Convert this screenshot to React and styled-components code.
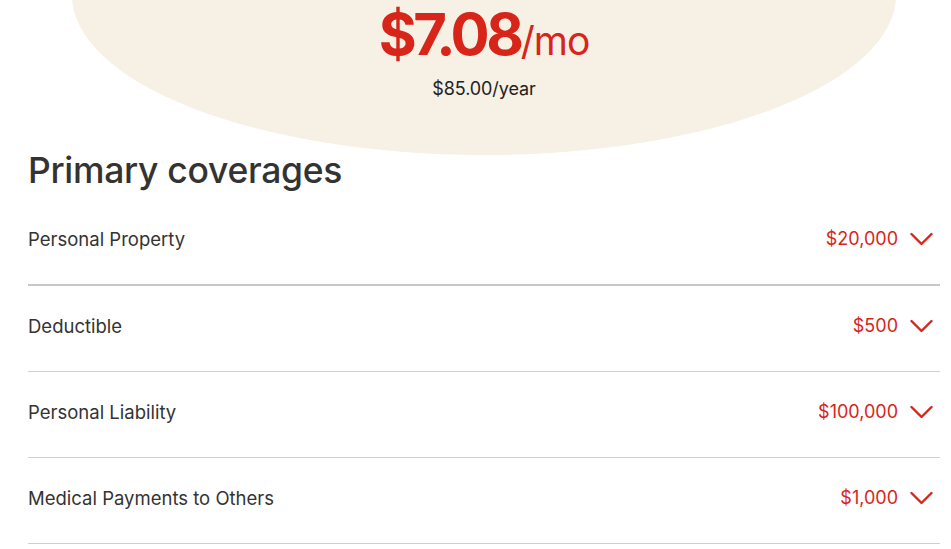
import React from 'react';
import styled, { createGlobalStyle } from 'styled-components';

const Global = createGlobalStyle`
  html, body {
    margin: 0;
    padding: 0;
    background: #fff;
    overflow: hidden;
  }
  body {
    font-family: Inter, "Liberation Sans", sans-serif;
    color: #333;
  }
`

const Page = styled.div`
  margin: 0 11px 0 28px;
`

const Hero = styled.div`
  width: 824px;
  height: 320px;
  margin: -165px auto 0;
  border-radius: 50%;
  background: #f6f0e5;
  display: flex;
  flex-direction: column;
  align-items: center;
  justify-content: flex-end;
  padding-bottom: 56px;
  box-sizing: border-box;
`

const Price = styled.div`
  display: flex;
  align-items: baseline;
  color: #d8251a;
  line-height: 1;
`

const Amount = styled.span`
  font-size: 58px;
  font-weight: 700;
  letter-spacing: -3.4px;
`

const Per = styled.span`
  font-size: 39px;
  font-weight: 400;
  letter-spacing: -1px;
`

const Yearly = styled.div`
  margin-top: 15px;
  font-size: 18px;
  color: #222;
  letter-spacing: -0.1px;
`

const Heading = styled.h1`
  margin: -6px 0 6px;
  font-size: 35.5px;
  line-height: 44px;
  font-weight: 500;
  color: #333;
  letter-spacing: -0.3px;
`

const Row = styled.div`
  display: flex;
  align-items: center;
  justify-content: space-between;
  padding: 29px 7px 34px 0;
  line-height: 22px;
  border-bottom: ${p => (p.$strong ? '2px solid #c6c6c6' : '1px solid #d0d0d0')};
`

const Label = styled.span`
  font-size: 18.5px;
  color: #333;
`

const Value = styled.span`
  display: flex;
  align-items: center;
  gap: 12px;
  font-size: 18px;
  color: #d8251a;
`

const Chevron = () => (
  <svg width="23" height="14" viewBox="0 0 23 14" fill="none">
    <polyline points="1.5,2 11.5,12 21.5,2" stroke="#d8251a" strokeWidth="2.4" strokeLinecap="round" strokeLinejoin="round" />
  </svg>
)

const coverages = [
  { label: 'Personal Property', value: '$20,000' },
  { label: 'Deductible', value: '$500' },
  { label: 'Personal Liability', value: '$100,000' },
  { label: 'Medical Payments to Others', value: '$1,000' },
]

export default function App() {
  return (
    <>
      <Global />
      <Page>
        <Hero>
          <Price>
            <Amount>$7.08</Amount>
            <Per>/mo</Per>
          </Price>
          <Yearly>$85.00/year</Yearly>
        </Hero>
        <Heading>Primary coverages</Heading>
        {coverages.map((c, i) => (
          <Row key={c.label} $strong={i === 0}>
            <Label>{c.label}</Label>
            <Value>
              {c.value}
              <Chevron />
            </Value>
          </Row>
        ))}
      </Page>
    </>
  );
}
